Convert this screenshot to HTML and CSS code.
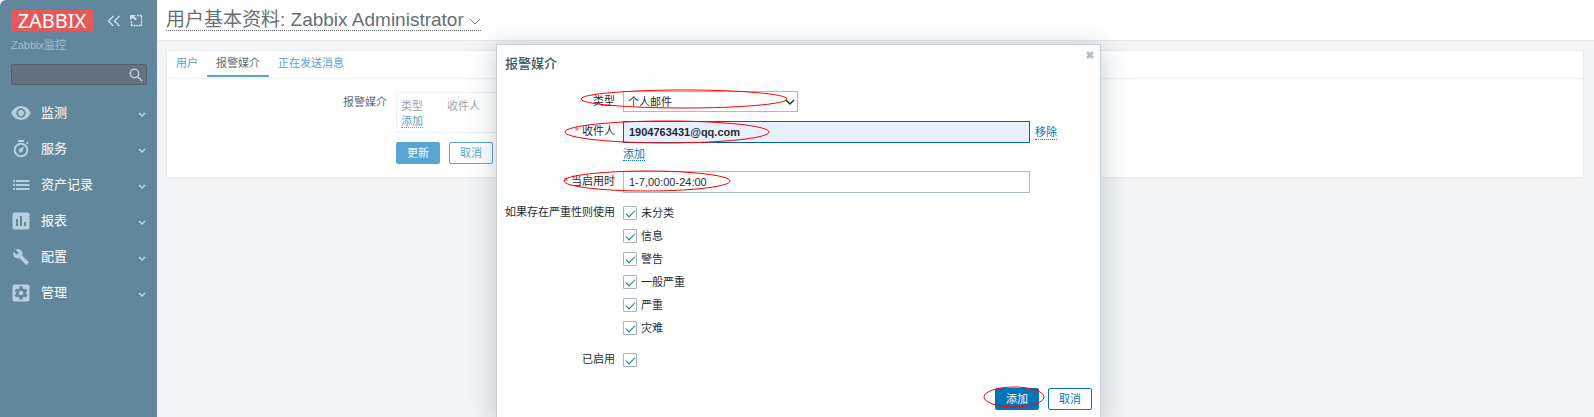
FILE: index.html
```html
<!DOCTYPE html>
<html lang="zh-CN">
<head>
<meta charset="utf-8">
<title>用户基本资料</title>
<link rel="stylesheet" href="styles.css">
</head>
<body>
<div class="page">
  <aside class="sidebar">
    <div class="brand">
      <a class="logo" href="#">ZABBIX</a>
      <button class="icon-button" type="button" aria-label="收起">
        <svg width="14" height="12" viewBox="0 0 14 12"><path d="M6.500 1 1.500 6l5 5M12.500 1l-5 5 5 5"/></svg>
      </button>
      <button class="icon-button" type="button" aria-label="隐藏">
        <svg width="13" height="13" viewBox="0 0 13 13"><path d="M7 1.500h5.500M11.500 2v10M1 11.500h10M1.500 7v5" stroke-dasharray="2 .6"/><path class="fill" d="M0 1h6L4.500 2.500 7 5 5.500 6.500 2.500 4 0 6.500z"/></svg>
      </button>
    </div>
    <div class="server-name">Zabbix监控</div>
    <form class="search">
      <input class="search-input" type="text" aria-label="搜索">
      <button class="search-button" type="button" aria-label="搜索">
        <svg width="14" height="14" viewBox="0 0 14 14"><circle cx="5.500" cy="5.500" r="4.200"/><path d="M8.500 8.500 13 13"/></svg>
      </button>
    </form>
    <nav class="menu">
      <a class="menu-item" href="#">
        <svg class="menu-icon" viewBox="0 0 20 20"><path fill-rule="evenodd" d="M10 3C5.500 3 2 6 .3 10 2 14 5.500 17 10 17s8-3 9.700-7C18 6 14.500 3 10 3zm0 2.300a4.700 4.700 0 1 1 0 9.400 4.700 4.700 0 0 1 0-9.400z"/><circle cx="10" cy="10" r="2.900"/></svg>
        <span>监测</span><svg class="chevron" viewBox="0 0 8 6"><path d="m1 1 3 3 3-3"/></svg></a>
      <a class="menu-item" href="#">
        <svg class="menu-icon" viewBox="0 0 20 20"><path d="M7 1h6v2H7zM15 4l1.300-1.300 1.300 1.300-1.300 1.300z"/><circle class="ring" cx="10" cy="11" r="6.300"/><path d="M13 7.500 11.700 12a2 2 0 1 1-2.500-2.500z"/></svg>
        <span>服务</span><svg class="chevron" viewBox="0 0 8 6"><path d="m1 1 3 3 3-3"/></svg></a>
      <a class="menu-item" href="#">
        <svg class="menu-icon" viewBox="0 0 20 20"><path d="M2 5h2v2H2zM5 5h13.500v2H5zM2 9h2v2H2zM5 9h13.500v2H5zM2 13h2v2H2zM5 13h13.500v2H5z"/></svg>
        <span>资产记录</span><svg class="chevron" viewBox="0 0 8 6"><path d="m1 1 3 3 3-3"/></svg></a>
      <a class="menu-item" href="#">
        <svg class="menu-icon" viewBox="0 0 20 20"><path fill-rule="evenodd" d="M3.500 1.500h13a2 2 0 0 1 2 2v13a2 2 0 0 1-2 2h-13a2 2 0 0 1-2-2v-13a2 2 0 0 1 2-2zM5 8v7h2V8zM9 5v10h2V5zM13 11v4h2v-4z"/></svg>
        <span>报表</span><svg class="chevron" viewBox="0 0 8 6"><path d="m1 1 3 3 3-3"/></svg></a>
      <a class="menu-item" href="#">
        <svg class="menu-icon" viewBox="-2 -2 28 28"><path d="m22.700 19-9.100-9.100c.9-2.300.4-5-1.500-6.900-2-2-5-2.400-7.400-1.300L9 6 6 9 1.600 4.700C.4 7.100.9 10.100 2.900 12.100c1.900 1.900 4.600 2.400 6.900 1.500l9.100 9.100c.4.4 1 .4 1.400 0l2.300-2.300c.5-.4.5-1.100.1-1.400z"/></svg>
        <span>配置</span><svg class="chevron" viewBox="0 0 8 6"><path d="m1 1 3 3 3-3"/></svg></a>
      <a class="menu-item" href="#">
        <svg class="menu-icon" viewBox="0 0 20 20"><path fill-rule="evenodd" d="M3.500 1.500h13a2 2 0 0 1 2 2v13a2 2 0 0 1-2 2h-13a2 2 0 0 1-2-2v-13a2 2 0 0 1 2-2zM8.500 3.500 8.200 5.400 6.900 6.200 5.100 5.500 3.600 8.100 5.100 9.300v1.400l-1.500 1.200 1.500 2.600 1.800-.7 1.300.8.300 1.900h3l.3-1.900 1.300-.8 1.800.7 1.500-2.600-1.500-1.200V9.300l1.500-1.200-1.500-2.600-1.800.7-1.300-.8-.3-1.900z"/><circle cx="10" cy="10" r="2.200"/></svg>
        <span>管理</span><svg class="chevron" viewBox="0 0 8 6"><path d="m1 1 3 3 3-3"/></svg></a>
    </nav>
  </aside>

  <main class="content">
    <header class="page-header">
      <h1 class="page-title"><a href="#">用户基本资料: Zabbix Administrator <svg width="12" height="8" viewBox="0 0 12 8"><path d="m1 1 5 5 5-5"/></svg></a></h1>
    </header>
    <section class="panel">
      <nav class="tabs">
        <a class="tab" href="#">用户</a>
        <a class="tab tab-active" href="#">报警媒介</a>
        <a class="tab" href="#">正在发送消息</a>
      </nav>
      <div class="profile-form">
        <div class="profile-label">报警媒介</div>
        <div class="media-box">
          <table class="media-table">
            <thead><tr><th>类型</th><th>收件人</th></tr></thead>
            <tbody><tr><td><a class="dotted" href="#">添加</a></td><td></td></tr></tbody>
          </table>
        </div>
        <div class="actions">
          <button class="button button-primary" type="button">更新</button>
          <button class="button" type="button">取消</button>
        </div>
      </div>
    </section>
  </main>
</div>

<div class="dialog" role="dialog" aria-labelledby="dialog-title">
  <button class="close" type="button" aria-label="关闭"><svg width="8" height="8" viewBox="0 0 8 8"><path d="m1 1 6 6M7 1 1 7"/></svg></button>
  <h2 class="dialog-title" id="dialog-title">报警媒介</h2>
  <form class="dialog-form">
    <label class="label" for="type">类型</label>
    <div class="field">
      <div class="select-box">
        <select class="select" id="type"><option>个人邮件</option></select>
        <svg class="select-arrow" width="10" height="7" viewBox="0 0 10 7"><path d="m1 1 4 4 4-4"/></svg>
      </div>
    </div>

    <label class="label required" for="sendto">收件人</label>
    <div class="field">
      <div class="recipient">
        <input class="text-input text-input-focused" id="sendto" type="text" value="1904763431@qq.com">
        <a class="dotted" href="#">移除</a>
      </div>
      <div class="add-row"><a class="dotted" href="#">添加</a></div>
    </div>

    <label class="label required" for="period">当启用时</label>
    <div class="field"><input class="text-input" id="period" type="text" value="1-7,00:00-24:00"></div>

    <div class="label" id="severity">如果存在严重性则使用</div>
    <div class="checks" role="group" aria-labelledby="severity">
      <label class="check"><input class="checkbox" type="checkbox" checked>未分类</label>
      <label class="check"><input class="checkbox" type="checkbox" checked>信息</label>
      <label class="check"><input class="checkbox" type="checkbox" checked>警告</label>
      <label class="check"><input class="checkbox" type="checkbox" checked>一般严重</label>
      <label class="check"><input class="checkbox" type="checkbox" checked>严重</label>
      <label class="check"><input class="checkbox" type="checkbox" checked>灾难</label>
    </div>

    <label class="label" for="enabled">已启用</label>
    <div class="checks"><span class="check"><input class="checkbox" id="enabled" type="checkbox" checked></span></div>
  </form>
  <footer class="dialog-footer">
    <button class="button button-primary" type="button">添加</button>
    <button class="button" type="button">取消</button>
  </footer>
  <svg class="marks" width="603" height="376" viewBox="0 0 603 376">
    <ellipse cx="187" cy="54" rx="103" ry="9"/>
    <ellipse cx="170" cy="87" rx="102" ry="11"/>
    <ellipse cx="150" cy="136" rx="83" ry="10"/>
    <ellipse cx="517" cy="352" rx="30" ry="10"/>
  </svg>
</div>
</body>
</html>
```
FILE: styles.css
```css
* { box-sizing: border-box; }

body {
  margin: 0;
  height: 100vh;
  overflow: hidden;
  background: #f2f4f6;
  color: #1f2c33;
  font: 11px/14px "Liberation Sans", "Noto Sans CJK SC", sans-serif;
}

a { color: inherit; text-decoration: none; }
button, input, select { font: inherit; }

.page { display: flex; min-height: 100vh; }

.sidebar {
  width: 157px;
  flex: none;
  padding: 10px 10px 0 11px;
  border-top-left-radius: 6px;
  background: #62879d;
  color: #b5cfdf;
}
.brand { display: flex; align-items: center; height: 21px; }
.logo {
  width: 82px;
  flex: none;
  margin-right: 14px;
  background: #e45959;
  color: #fff;
  font: 20px/21px "Noto Sans", "Liberation Sans", sans-serif;
  text-align: center;
}
.icon-button {
  display: flex;
  flex: none;
  margin-right: 9px;
  padding: 0;
  border: 0;
  background: none;
}
.icon-button:last-child { margin-right: 0; }
.icon-button svg { fill: none; stroke: #c9dde8; stroke-width: 1.4; }
.icon-button .fill { fill: #c9dde8; stroke: none; }
.server-name { margin-top: 7px; color: #a3bccb; }

.search {
  display: flex;
  align-items: center;
  height: 21px;
  margin-top: 12px;
  padding-right: 3px;
  border: 1px solid #52626d;
  border-radius: 2px;
  background: #62737f;
}
.search-input { flex: 1; min-width: 0; border: 0; background: none; color: #fff; }
.search-button { display: flex; padding: 0; border: 0; background: none; }
.search-button svg { fill: none; stroke: #b9cfdb; stroke-width: 1.6; }

.menu { margin-top: 10px; }
.menu-item {
  display: flex;
  align-items: center;
  height: 36px;
  padding-right: 1px;
  color: #fff;
  font-size: 13px;
}
.menu-icon { width: 20px; height: 20px; margin-right: 10px; fill: #b5cfdf; }
.ring { fill: none; stroke: #b5cfdf; stroke-width: 2; }
.chevron { width: 8px; height: 6px; margin: 4px 0 0 auto; fill: none; stroke: #c3d7e2; stroke-width: 1.4; }

.content { flex: 1; min-width: 0; }
.page-header {
  height: 41px;
  padding: 9px 9px 0;
  border-bottom: 1px solid #e5e9ec;
  background: #fff;
}
.page-title { margin: 0; color: #666f76; font-size: 19px; font-weight: 400; line-height: 21px; }
.page-title a { display: inline-block; border-bottom: 1px dotted #666f76; }
.page-title svg { fill: none; stroke: #777f85; }

.panel { margin: 9px 10px 9px 9px; border: 1px solid #e5eaed; background: #fff; }
.tabs { display: flex; height: 28px; padding-bottom: 1px; border-bottom: 1px solid #edf0f2; }
.tab { padding: 5px 9px 0; color: #579fcd; }
.tab-active { border-bottom: 2px solid #5aa4d4; color: #626c73; }

.profile-form {
  display: grid;
  grid-template-columns: 220px 1fr;
  column-gap: 9px;
  row-gap: 9px;
  padding: 13px 10px 13px 0;
}
.profile-label { padding-top: 3px; color: #626c73; text-align: right; }
.media-box { width: 300px; padding: 5px 4px 4px; border: 1px solid #edf0f2; }
.media-table { border-collapse: collapse; color: #9aa5ab; }
.media-table th, .media-table td { height: 15px; padding: 0 24px 0 0; font-weight: 400; text-align: left; }
.actions { grid-column: 2; display: flex; gap: 9px; }
.panel .dotted { color: #579fcd; }

.dotted { border-bottom: 1px dotted; color: #0275b8; }

.button {
  height: 22px;
  padding: 0 10px;
  border: 1px solid #0275b8;
  border-radius: 2px;
  background: #fff;
  color: #0275b8;
  line-height: 18px;
}
.button-primary { background: #0275b8; color: #fff; }
.panel .button { border-color: #5aa4d4; color: #5aa4d4; }
.panel .button-primary { background: #5aa4d4; color: #fff; }

.dialog {
  position: absolute;
  top: 44px;
  left: calc(50% - 301px);
  width: 605px;
  padding: 11px 8px 9px;
  border: 1px solid #c5ced4;
  background: #fff;
  box-shadow: 0 4px 26px rgba(0, 40, 60, .24);
}
.close { position: absolute; top: 6px; right: 6px; display: flex; padding: 0; border: 0; background: none; }
.close svg { fill: none; stroke: #b5c1c7; stroke-width: 3; }
.dialog-title { margin: 0; color: #3c5563; font-size: 13px; font-weight: 500; line-height: 16px; }

.dialog-form { display: grid; grid-template-columns: 110px 1fr; column-gap: 8px; row-gap: 9px; margin-top: 19px; }
.label { padding-top: 3px; text-align: right; white-space: nowrap; }
.required::before { content: "* "; color: #e45959; }
.field { display: flex; flex-direction: column; align-items: flex-start; }
.select-box { position: relative; display: flex; }
.select {
  appearance: none;
  width: 175px;
  height: 21px;
  padding: 0 4px;
  border: 1px solid #acbbc2;
  border-radius: 0;
  background: #fff;
  color: inherit;
}
.select-arrow {
  position: absolute;
  top: 8px;
  right: 3px;
  pointer-events: none;
  fill: none;
  stroke: #1f2c33;
  stroke-width: 1.4;
}
.text-input {
  width: 407px;
  height: 22px;
  padding: 0 5px;
  border: 1px solid #acbbc2;
  background: #fff;
  color: inherit;
}
.text-input-focused { border-color: #02659f; background: #e8f0fe; font-weight: 700; }
.recipient { display: flex; align-items: center; gap: 5px; }
.add-row { margin-top: 4px; line-height: 15px; }

.checks { display: grid; row-gap: 9px; padding: 4px 0 5px; }
.check { display: flex; align-items: center; gap: 4px; height: 14px; }
.checkbox {
  appearance: none;
  display: grid;
  place-items: center;
  width: 14px;
  height: 14px;
  margin: 0;
  border: 1px solid #a5b5bd;
  border-radius: 1px;
}
.checkbox:checked::before {
  content: "";
  width: 8px;
  height: 4px;
  border: solid #0275b8;
  border-width: 0 0 1px 1px;
  transform: translateY(-1px) rotate(-45deg);
}

.dialog-footer { display: flex; justify-content: flex-end; gap: 9px; margin-top: 16px; }
.marks { position: absolute; top: 0; left: 0; pointer-events: none; fill: none; stroke: #f00; }
```
